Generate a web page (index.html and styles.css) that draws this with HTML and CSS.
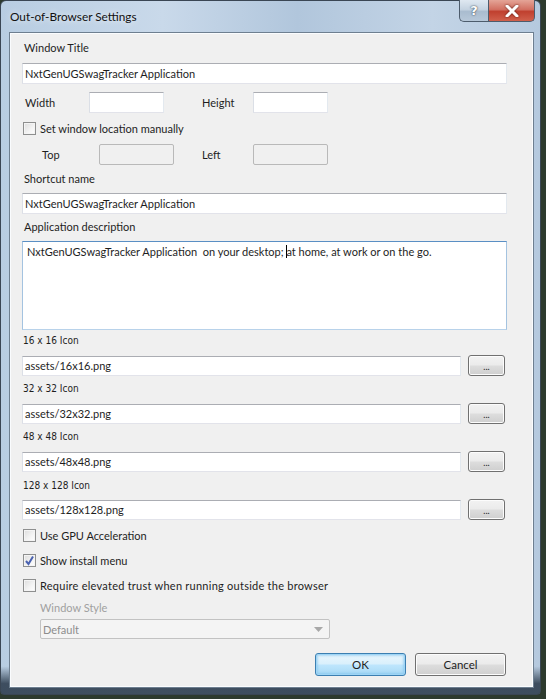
FILE: index.html
```html
<!DOCTYPE html>
<html>
<head>
<meta charset="utf-8">
<link rel="stylesheet" href="styles.css">
</head>
<body>
<div class="window">
  <div class="titlebar">
    <div class="title">Out-of-Browser Settings</div>
    <div class="caption-btns">
      <div class="cbtn help">?</div>
      <div class="cbtn close">
        <svg width="14" height="12" viewBox="0 0 14 12"><path d="M2 1 L12 11 M12 1 L2 11" stroke="#fff" stroke-width="3" stroke-linecap="round" fill="none"/></svg>
      </div>
    </div>
  </div>
  <div class="panel">
    <div class="label l-wt">Window Title</div>
    <div class="input full i-wt">NxtGenUGSwagTracker Application</div>

    <div class="pair r-size">
      <span class="plabel w1">Width</span><span class="input small"></span>
      <span class="plabel w2">Height</span><span class="input small"></span>
    </div>

    <div class="check r-loc"><span class="box"></span><span>Set window location manually</span></div>

    <div class="pair r-pos">
      <span class="plabel w3">Top</span><span class="input small disabled"></span>
      <span class="plabel w4">Left</span><span class="input small disabled"></span>
    </div>

    <div class="label l-sn">Shortcut name</div>
    <div class="input full i-sn">NxtGenUGSwagTracker Application</div>

    <div class="label l-ad">Application description</div>
    <div class="textarea">NxtGenUGSwagTracker Application&nbsp; on your desktop; <span class="caret"></span>at home, at work or on the go.</div>

    <div class="label l-ic1 tah">16 x 16 Icon</div>
    <div class="filerow r-ic1"><span class="input file">assets/16x16.png</span><span class="btn dots">...</span></div>
    <div class="label l-ic tah">32 x 32 Icon</div>
    <div class="filerow r-ic"><span class="input file">assets/32x32.png</span><span class="btn dots">...</span></div>
    <div class="label l-ic tah">48 x 48 Icon</div>
    <div class="filerow r-ic"><span class="input file">assets/48x48.png</span><span class="btn dots">...</span></div>
    <div class="label l-ic4 tah">128 x 128 Icon</div>
    <div class="filerow r-ic4"><span class="input file">assets/128x128.png</span><span class="btn dots">...</span></div>

    <div class="check c1"><span class="box"></span><span>Use GPU Acceleration</span></div>
    <div class="check c2"><span class="box checked"><svg width="11" height="11" viewBox="0 0 11 11"><path d="M2 6 L4.5 9 L9 1.5" stroke="#4a62b0" stroke-width="2" fill="none"/></svg></span><span>Show install menu</span></div>
    <div class="check c3"><span class="box"></span><span class="wide">Require elevated trust when running outside the browser</span></div>

    <div class="label dim l-ws">Window Style</div>
    <div class="select"><span>Default</span><svg width="9" height="5" viewBox="0 0 9 5"><path d="M0 0 L9 0 L4.5 5 Z" fill="#a8a8a8"/></svg></div>

    <div class="buttons">
      <span class="btn big default">OK</span>
      <span class="btn big">Cancel</span>
    </div>
  </div>
</div>
</body>
</html>
```
FILE: styles.css
```css
html, body {
  margin: 0;
  padding: 0;
}
body {
  width: 546px;
  height: 699px;
  background: #2d3a2e;
  font-family: Lato, "Noto Sans", sans-serif;
  font-size: 11px;
  color: #1e1e1e;
  overflow: hidden;
}
.window {
  width: 541px;
  height: 695px;
  box-sizing: border-box;
  border: 1px solid #3a4654;
  border-radius: 6px 6px 4px 4px;
  background:
    linear-gradient(180deg, rgba(255,255,255,0) 0, rgba(255,255,255,0) 96%, rgba(40,55,72,0.85) 98.5%),
    linear-gradient(90deg, #b8cde2 0%, #c9d9ea 30%, #b1c6dc 55%, #c3d4e6 80%, #b5c9de 100%);
  display: flex;
  flex-direction: column;
}
.titlebar {
  height: 31px;
  display: flex;
  justify-content: space-between;
  align-items: flex-start;
  padding-left: 9px;
}
.title {
  font-size: 11.8px;
  color: #111;
  margin-top: 8px;
  text-shadow: 0 0 6px rgba(255,255,255,0.9);
}
.caption-btns {
  display: flex;
  margin-right: 5px;
  margin-top: -1px;
}
.cbtn {
  height: 22px;
  box-sizing: border-box;
  border: 1px solid #4d5c6c;
  border-top: none;
  display: flex;
  align-items: center;
  justify-content: center;
}
.help {
  width: 29px;
  border-radius: 0 0 0 5px;
  border-right: none;
  background: linear-gradient(180deg, #dfe8f1 0%, #c5d3e1 45%, #a9bccf 55%, #b7c8d9 100%);
  color: #fff;
  font-weight: bold;
  font-size: 13px;
  font-family: "DejaVu Sans", sans-serif;
  text-shadow: 0 0 2px #45525f, 0 0 1px #45525f;
}
.close {
  width: 47px;
  border-radius: 0 0 5px 0;
  background: linear-gradient(180deg, #e4a497 0%, #d27062 45%, #c0402f 55%, #d0604c 100%);
}
.close svg {
  filter: drop-shadow(0 0 1px #5a1a12);
}
.panel {
  margin-left: 8px;
  width: 525px;
  height: 656px;
  box-sizing: border-box;
  background: #f0f0f0;
  border: 1px solid #6e7f90;
  box-shadow: inset 0 0 0 1px #fafcfe;
  padding: 7px 0 0 12px;
  display: flex;
  flex-direction: column;
  align-items: flex-start;
}
.label {
  height: 16px;
  line-height: 16px;
  padding-left: 2px;
  white-space: nowrap;
}
.tah {
  font-family: "DejaVu Sans Condensed", "DejaVu Sans", sans-serif;
  font-stretch: condensed;
  font-size: 10px;
  padding-left: 1px;
}
.dim { color: #a0a0a0; }
.input {
  box-sizing: border-box;
  height: 21px;
  line-height: 19px;
  background: #fff;
  border: 1px solid #e2e3ea;
  border-top-color: #abadb3;
  border-left-color: #dbdfe6;
  border-right-color: #e3e9ef;
  padding-left: 2px;
  white-space: nowrap;
}
.full { width: 485px; }
.i-wt { margin-top: 7px; }
.pair {
  display: flex;
  align-items: center;
  height: 21px;
}
.r-size { margin-top: 8px; padding-left: 3px; }
.r-pos { margin-top: 8px; padding-left: 20px; }
.plabel { display: inline-block; }
.w1 { width: 64px; }
.w2 { width: 51px; margin-left: 38px; }
.w3 { width: 57px; }
.w4 { width: 51px; margin-left: 28px; }
.small { width: 75px; }
.disabled {
  background: #f0f0f0;
  border: 1px solid #b9b9b9;
  border-radius: 2px;
}
.check {
  display: flex;
  align-items: center;
  height: 16px;
  gap: 4px;
  padding-left: 1px;
  white-space: nowrap;
}
.wide { letter-spacing: 0.25px; }
.box {
  width: 13px;
  height: 13px;
  box-sizing: border-box;
  border: 1px solid #8e8f8f;
  background: linear-gradient(135deg, #dcdcdc 0%, #f4f4f4 60%, #ffffff 100%);
  box-shadow: inset 0 0 0 1px #f4f4f4;
  display: flex;
  align-items: center;
  justify-content: center;
}
.r-loc { margin-top: 7px; }
.l-sn { margin-top: 6px; }
.i-sn { margin-top: 6px; }
.l-ad { margin-top: 5px; }
.textarea {
  margin-top: 6px;
  width: 485px;
  height: 89px;
  box-sizing: border-box;
  background: #fff;
  border: 1px solid #7f9db9;
  border-color: #5a8fc4 #a4c3e0 #b8d2ea #a4c3e0;
  padding: 2px 4px;
  line-height: 15px;
  white-space: nowrap;
}
.caret {
  display: inline-block;
  width: 1px;
  height: 13px;
  background: #000;
  vertical-align: -2px;
  margin-right: -1px;
}
.l-ic1 { margin-top: 3px; }
.l-ic { margin-top: 5px; }
.l-ic4 { margin-top: 6px; }
.filerow {
  display: flex;
  align-items: center;
  gap: 7px;
  height: 21px;
  margin-top: 6px;
}
.r-ic4 { margin-top: 5px; }
.file {
  width: 439px;
  height: 20px;
  line-height: 18px;
}
.btn {
  box-sizing: border-box;
  border: 1px solid #707070;
  border-radius: 3px;
  background: linear-gradient(180deg, #f2f2f2 0%, #ebebeb 48%, #dddddd 52%, #cfcfcf 100%);
  box-shadow: inset 0 0 0 1px #fcfcfc;
  display: flex;
  align-items: center;
  justify-content: center;
}
.dots {
  width: 37px;
  height: 21px;
  font-size: 9px;
  line-height: 9px;
  padding-top: 1px;
}
.c1 { margin-top: 7px; }
.c2 { margin-top: 9px; }
.c3 { margin-top: 9px; }
.l-ws { margin-top: 7px; margin-left: 16px; }
.select {
  margin-top: 3px;
  margin-left: 18px;
  width: 290px;
  height: 20px;
  box-sizing: border-box;
  border: 1px solid #c2c2c2;
  border-radius: 2px;
  background: #f4f4f4;
  color: #8d8d8d;
  display: flex;
  align-items: center;
  justify-content: space-between;
  padding: 0 6px 0 2px;
}
.buttons {
  margin-top: 14px;
  align-self: stretch;
  display: flex;
  justify-content: flex-end;
  gap: 9px;
  padding-right: 27px;
}
.big {
  width: 91px;
  height: 23px;
  font-size: 11.5px;
}
.default {
  border-color: #3c7fb1;
  box-shadow: inset 0 0 0 1px #9fd5f5, inset 0 0 2px 2px rgba(120,190,235,0.5);
  background: linear-gradient(180deg, #eaf6fd 0%, #d9f0fc 48%, #bee6fd 52%, #a7d9f5 100%);
}
```
